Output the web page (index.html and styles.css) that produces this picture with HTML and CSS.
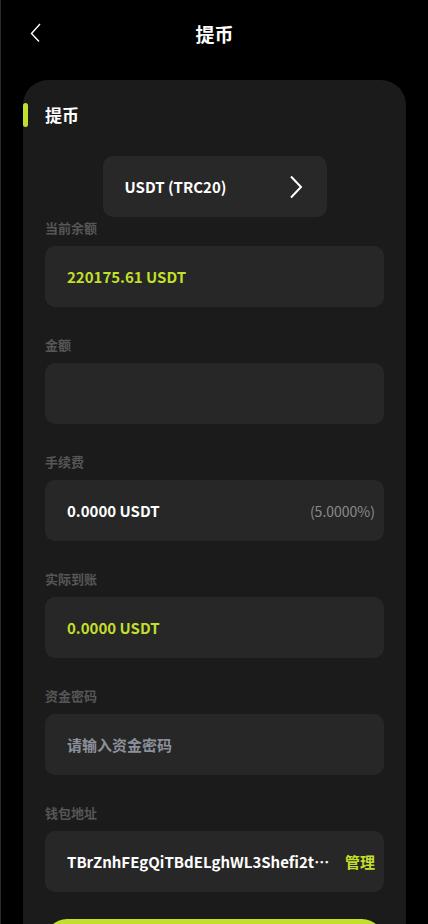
FILE: index.html
```html
<!DOCTYPE html>
<html lang="zh-CN">
<head>
  <meta charset="UTF-8">
  <title>提币</title>
  <link rel="stylesheet" href="styles.css">
</head>
<body>
  <header class="topbar">
    <span class="back">
      <svg width="12" height="20" viewBox="0 0 12 20"><path d="M10 1 L1.5 10.5 L9 18.5" fill="none" stroke="#fff" stroke-width="1.4"/></svg>
    </span>
    <h1>提币</h1>
    <span></span>
  </header>

  <div class="card">
    <div class="section-title">提币</div>

    <div class="coin-select">
      <span>USDT (TRC20)</span>
      <svg width="14" height="24" viewBox="0 0 14 24"><path d="M2 1.5 L12 12 L2 22.5" fill="none" stroke="#fff" stroke-width="2"/></svg>
    </div>

    <div class="row first">
      <div class="label">当前余额</div>
      <div class="field"><span class="value green">220175.61 USDT</span></div>
    </div>

    <div class="row">
      <div class="label">金额</div>
      <div class="field"></div>
    </div>

    <div class="row">
      <div class="label">手续费</div>
      <div class="field"><span class="value">0.0000 USDT</span><span class="rate">(5.0000%)</span></div>
    </div>

    <div class="row">
      <div class="label">实际到账</div>
      <div class="field"><span class="value green">0.0000 USDT</span></div>
    </div>

    <div class="row">
      <div class="label">资金密码</div>
      <div class="field"><span class="placeholder">请输入资金密码</span></div>
    </div>

    <div class="row last">
      <div class="label">钱包地址</div>
      <div class="field"><span class="value address">TBrZnhFEgQiTBdELghWL3Shefi2tXjHXmM</span><span class="manage">管理</span></div>
    </div>

    <button class="submit">提币</button>
  </div>
</body>
</html>
```

FILE: styles.css
```css
body {
  margin: 0;
  background: #000;
  color: #fff;
  font-family: "Noto Sans CJK SC", "Noto Sans", sans-serif;
  border-left: 1px solid #2a2a2a;
  height: 924px;
  overflow: hidden;
}
.topbar {
  display: grid;
  grid-template-columns: 1fr auto 1fr;
  align-items: center;
  height: 66px;
  padding: 0 29px;
}
.topbar h1 {
  margin: 0;
  font-size: 19px;
  font-weight: bold;
}
.back {
  display: flex;
}
.card {
  margin: 14px 22px 0 22px;
  background: #1b1b1b;
  border-radius: 25px 25px 0 0;
  padding: 23px 22px 0 22px;
}
.section-title {
  position: relative;
  height: 24px;
  line-height: 24px;
  font-size: 17px;
  font-weight: bold;
}
.section-title::before {
  content: "";
  position: absolute;
  left: -22px;
  top: 0;
  width: 5px;
  height: 24px;
  border-radius: 3px;
  background: #c3df2b;
}
.coin-select {
  width: 224px;
  height: 61px;
  margin: 29px auto 0;
  box-sizing: border-box;
  padding: 0 24px 0 22px;
  background: #282828;
  border-radius: 10px;
  display: flex;
  align-items: center;
  justify-content: space-between;
  font-size: 15px;
  font-weight: bold;
}
.row {
  margin-bottom: 29px;
}
.row.first {
  margin-top: 2px;
}
.row.last {
  margin-bottom: 27px;
}
.label {
  height: 18px;
  line-height: 18px;
  font-size: 13px;
  font-weight: bold;
  color: #565656;
  margin-bottom: 9px;
}
.field {
  height: 61px;
  box-sizing: border-box;
  padding: 0 9px 0 22px;
  background: #272727;
  border-radius: 10px;
  display: flex;
  align-items: center;
  gap: 14px;
}
.value {
  font-size: 15px;
  font-weight: bold;
  color: #fff;
  flex: 1;
}
.value.green {
  color: #c3df2b;
}
.address {
  white-space: nowrap;
  overflow: hidden;
  text-overflow: ellipsis;
}
.rate {
  font-size: 14px;
  color: #8a8a8a;
}
.placeholder {
  font-size: 15px;
  font-weight: bold;
  color: #8b9099;
}
.manage {
  font-size: 15px;
  font-weight: bold;
  color: #c3df2b;
}
.submit {
  display: block;
  width: 100%;
  height: 50px;
  border: none;
  border-radius: 22px;
  background: #c3df2b;
  color: #000;
  font-family: inherit;
  font-size: 16px;
  font-weight: bold;
}
```
